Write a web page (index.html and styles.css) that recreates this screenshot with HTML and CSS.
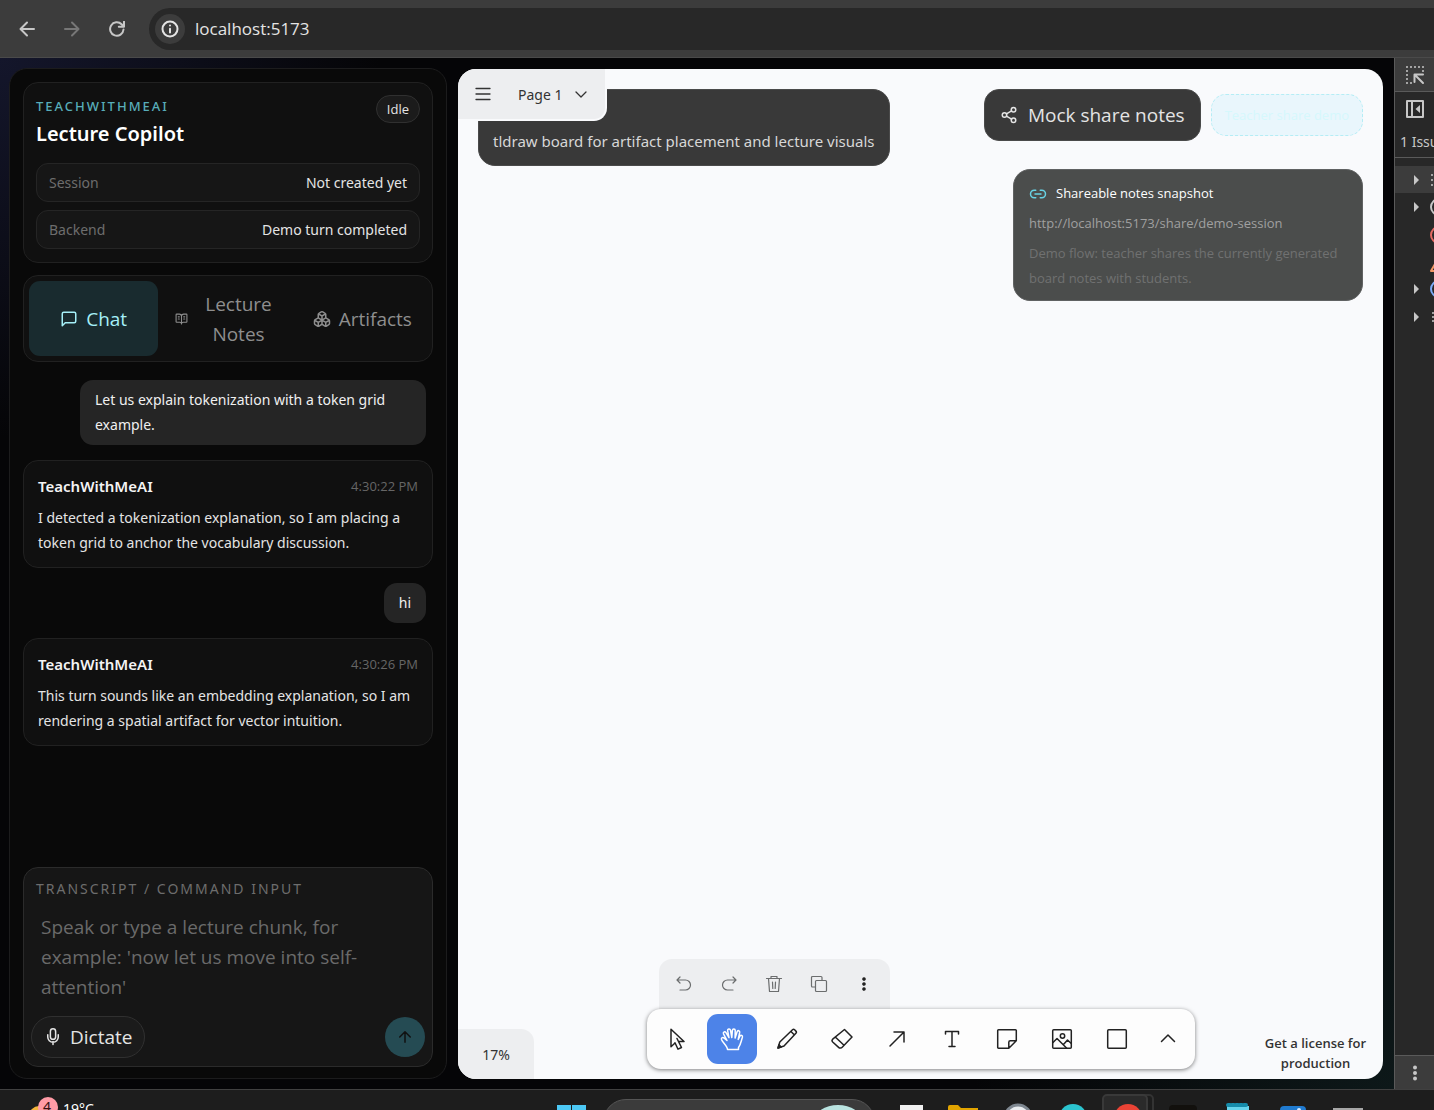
FILE: index.html
```
<!DOCTYPE html>
<html lang="en">
<head>
    <meta charset="UTF-8">
    <meta name="viewport" content="width=device-width, initial-scale=1.0">
    <title>TeachWithMeAI</title>
    <link rel="stylesheet" href="styles.css">
</head>
<body>
    <header class="browser-bar">
        <button class="nav-btn" aria-label="Back">
            <svg width="16" height="16" viewBox="0 0 16 16"><path d="M15 8H2M8 1.5L1.5 8 8 14.5"/></svg>
        </button>
        <button class="nav-btn nav-off" aria-label="Forward">
            <svg width="16" height="16" viewBox="0 0 16 16"><path d="M1 8h13M8 1.5L14.500 8 8 14.500"/></svg>
        </button>
        <button class="nav-btn" aria-label="Reload">
            <svg width="16" height="16" viewBox="0 0 16 16"><path d="M14.500 8.500A6.700 6.700 0 1 1 12.600 3.300L14.800 5.500M15 .5v5.300H9.800"/></svg>
        </button>
        <div class="address">
            <span class="site-info">
                <svg width="18" height="18" viewBox="0 0 18 18"><circle cx="9" cy="9" r="7.500"/><path d="M9 8.800v3.700M9 5.500v.1"/></svg>
            </span>
            <input class="url" type="text" value="localhost:5173" aria-label="Address">
        </div>
    </header>

    <div class="workspace">
        <main class="app">
            <aside class="sidebar">
                <section class="card intro">
                    <div class="intro-top">
                        <div>
                            <p class="eyebrow">TEACHWITHMEAI</p>
                            <h1>Lecture Copilot</h1>
                        </div>
                        <span class="pill">Idle</span>
                    </div>
                    <div class="status"><span>Session</span><strong>Not created yet</strong></div>
                    <div class="status"><span>Backend</span><strong>Demo turn completed</strong></div>
                </section>

                <nav class="card tabs">
                    <button class="tab active">
                        <svg width="18" height="18" viewBox="0 0 24 24"><path d="M21 15a2 2 0 0 1-2 2H7l-4 4V5a2 2 0 0 1 2-2h14a2 2 0 0 1 2 2z"/></svg>
                        <span>Chat</span>
                    </button>
                    <button class="tab">
                        <svg class="book" width="13" height="14" viewBox="0 0 24 24"><path d="M12 7v14M16 12h2M16 8h2M6 12h2M6 8h2M3 18a1 1 0 0 1-1-1V4a1 1 0 0 1 1-1h5a4 4 0 0 1 4 4 4 4 0 0 1 4-4h5a1 1 0 0 1 1 1v13a1 1 0 0 1-1 1h-6a3 3 0 0 0-3 3 3 3 0 0 0-3-3z"/></svg>
                        <span>Lecture Notes</span>
                    </button>
                    <button class="tab">
                        <svg width="18" height="18" viewBox="0 0 24 24"><path d="M2.970 12.920A2 2 0 0 0 2 14.630v3.240a2 2 0 0 0 .970 1.710l3 1.800a2 2 0 0 0 2.060 0L12 19v-5.500l-5-3zM7 16.500l-4.740-2.850M7 16.500l5-3M7 16.500v5.170M12 13.500V19l3.970 2.380a2 2 0 0 0 2.060 0l3-1.800a2 2 0 0 0 .970-1.710v-3.240a2 2 0 0 0-.970-1.710L17 10.500zM17 16.500l-5-3M17 16.500l4.740-2.850M17 16.500v5.170M7.970 4.420A2 2 0 0 0 7 6.130v4.370l5 3 5-3V6.130a2 2 0 0 0-.970-1.710l-3-1.800a2 2 0 0 0-2.060 0zM12 8L7.260 5.150M12 8l4.740-2.850M12 13.500V8"/></svg>
                        <span>Artifacts</span>
                    </button>
                </nav>

                <div class="messages">
                    <p class="bubble">Let us explain tokenization with a token grid example.</p>
                    <article class="card reply">
                        <div class="reply-top"><h2>TeachWithMeAI</h2><time>4:30:22 PM</time></div>
                        <p>I detected a tokenization explanation, so I am placing a token grid to anchor the vocabulary discussion.</p>
                    </article>
                    <p class="bubble">hi</p>
                    <article class="card reply">
                        <div class="reply-top"><h2>TeachWithMeAI</h2><time>4:30:26 PM</time></div>
                        <p>This turn sounds like an embedding explanation, so I am rendering a spatial artifact for vector intuition.</p>
                    </article>
                </div>

                <form class="card composer">
                    <label for="transcript">TRANSCRIPT / COMMAND INPUT</label>
                    <textarea id="transcript" rows="3" placeholder="Speak or type a lecture chunk, for example: 'now let us move into self-attention'"></textarea>
                    <div class="composer-actions">
                        <button type="button" class="dictate">
                            <svg width="18" height="18" viewBox="0 0 24 24"><path d="M12 18v4M19 9v3a7 7 0 0 1-14 0V9"/><rect x="8.500" y="1" width="7" height="14" rx="3.500"/></svg>
                            Dictate
                        </button>
                        <button type="button" class="send" aria-label="Send">
                            <svg width="18" height="18" viewBox="0 0 24 24"><path d="M12 19V5M5 12l7-7 7 7"/></svg>
                        </button>
                    </div>
                </form>
            </aside>

            <section class="board">
                <div class="board-title">tldraw board for artifact placement and lecture visuals</div>
                <div class="page-menu">
                    <button class="menu-btn" aria-label="Menu">
                        <svg width="16" height="16" viewBox="0 0 16 16"><path d="M1 2.500h14M1 8h14M1 13.500h14"/></svg>
                    </button>
                    <button class="page-btn">Page 1
                        <svg width="14" height="14" viewBox="0 0 14 14"><path d="M2 5l5 5 5-5"/></svg>
                    </button>
                </div>

                <div class="share">
                    <div class="share-row">
                        <button class="share-btn">
                            <svg width="18" height="18" viewBox="0 0 24 24"><circle cx="18" cy="5" r="3"/><circle cx="6" cy="12" r="3"/><circle cx="18" cy="19" r="3"/><path d="M8.590 13.510l6.830 3.980M15.410 6.510l-6.820 3.980"/></svg>
                            Mock share notes
                        </button>
                        <span class="share-tag">Teacher share demo</span>
                    </div>
                    <div class="snapshot">
                        <h3>
                            <svg width="18" height="18" viewBox="0 0 24 24"><path d="M9 17H7A5 5 0 0 1 7 7h2M15 7h2a5 5 0 1 1 0 10h-2M8 12h8"/></svg>
                            Shareable notes snapshot
                        </h3>
                        <p class="snapshot-url">http://localhost:5173/share/demo-session</p>
                        <p class="snapshot-note">Demo flow: teacher shares the currently generated board notes with students.</p>
                    </div>
                </div>

                <button class="zoom-level">17%</button>

                <div class="tools">
                    <div class="actions">
                        <button aria-label="Undo"><svg width="18" height="18" viewBox="0 0 18 18"><path d="M5 2L2 5l3 3M2 5h8.500a5 5 0 0 1 0 10H5"/></svg></button>
                        <button aria-label="Redo"><svg width="18" height="18" viewBox="0 0 18 18"><path d="M13 2l3 3-3 3M16 5H7.500a5 5 0 0 0 0 10H13"/></svg></button>
                        <button aria-label="Delete"><svg width="18" height="18" viewBox="0 0 18 18"><path d="M1.500 3.500h15M6 3.500v-2h6v2M3.500 3.500l1 13h9l1-13M7.500 7l.3 6.500M10.500 7l-.3 6.500"/></svg></button>
                        <button aria-label="Duplicate"><svg width="18" height="18" viewBox="0 0 18 18"><rect x="5.500" y="5.500" width="11" height="11" rx="1"/><path d="M5 12H2.500a1 1 0 0 1-1-1V2.500a1 1 0 0 1 1-1H11a1 1 0 0 1 1 1V5"/></svg></button>
                        <button class="more" aria-label="More"><svg width="18" height="18" viewBox="0 0 18 18"><circle cx="9" cy="4" r="1.200"/><circle cx="9" cy="9" r="1.200"/><circle cx="9" cy="14" r="1.200"/></svg></button>
                    </div>
                    <div class="toolbar">
                        <button aria-label="Select"><svg width="22" height="22" viewBox="0 0 22 22"><path d="M8.500 15.500L5 18.800V1.200L18 13.500h-5.500l3 6-3.500 1.700-3-6.500M12.500 13.500l-1.500-3"/></svg></button>
                        <button class="active" aria-label="Hand"><svg width="24" height="24" viewBox="0 0 24 24"><path d="M7.500 22.500C7.500 19 2.500 15.500 1.500 12.500 1 10.800 3 9.800 4.200 11.200L7 13.500 3.500 6.900C2.700 5 5 4 6 5.700l3 5L7.600 3.700C7.400 1.700 10 1.300 10.500 3.200l1.300 7.300.6-7.200c.2-1.800 2.700-1.800 2.800.1l-.1 7.600 2-6.300c.6-1.800 2.900-1.100 2.600.7l-1.500 7 1.700-3.300c.9-1.600 3-.6 2.500 1.200C21 14.500 20.500 18 18.500 20.500v2z"/></svg></button>
                        <button aria-label="Draw"><svg width="22" height="22" viewBox="0 0 22 22"><path d="M2 20l1.800-6L16.500 1.800a1.500 1.500 0 0 1 2.100 0l1.300 1.300a1.500 1.500 0 0 1 0 2.100L8 18zM15 3.500l3.200 3.200"/><path fill="currentColor" d="M2 20l1-3.200 2.200 2.200z"/></svg></button>
                        <button aria-label="Eraser"><svg width="22" height="22" viewBox="0 0 22 22"><path d="M13.500 1.500L21 9l-9.800 10.300a2.500 2.500 0 0 1-3.600.1L1.700 14a2 2 0 0 1 0-2.800zM4.800 9.500l8.200 7.800"/></svg></button>
                        <button aria-label="Arrow"><svg width="22" height="22" viewBox="0 0 22 22"><path d="M4 18L18 4M8 4h10v10"/></svg></button>
                        <button aria-label="Text"><svg width="22" height="22" viewBox="0 0 22 22"><path d="M4.500 6V3.500h13V6M11 3.500v15M8 18.500h6"/></svg></button>
                        <button aria-label="Note"><svg width="22" height="22" viewBox="0 0 22 22"><path d="M2.500 1.700h17a.8.8 0 0 1 .8.800v10.200l-7.500 7.600H2.500a.8.8 0 0 1-.8-.8V2.500a.8.8 0 0 1 .8-.8zM20.300 12.700h-6a1.500 1.500 0 0 0-1.500 1.500v6"/></svg></button>
                        <button aria-label="Asset"><svg width="22" height="22" viewBox="0 0 22 22"><rect x="1.700" y="1.700" width="18.600" height="18.600" rx="1"/><circle cx="11.500" cy="8" r="2.200"/><path d="M2 14.500l4-4 9.500 9.500M12.500 16.500l4-4.500 3.800 3.500"/></svg></button>
                        <button aria-label="Rectangle"><svg width="22" height="22" viewBox="0 0 22 22"><rect x="1.700" y="1.700" width="18.600" height="18.600" rx="1"/></svg></button>
                        <button aria-label="More tools"><svg width="22" height="22" viewBox="0 0 22 22"><path d="M4.500 13.500L11 7l6.500 6.500"/></svg></button>
                    </div>
                </div>

                <a class="license" href="#">Get a license for production</a>
            </section>
        </main>

        <aside class="devtools">
            <button class="dev-inspect" aria-label="Inspect">
                <svg width="20" height="20" viewBox="0 0 20 20"><path class="dots" d="M2 18V2h16v5M2 18h5"/><path d="M18 18L9.500 9.500M9.500 17V9.500H18"/></svg>
            </button>
            <button class="dev-panel" aria-label="Show sidebar">
                <svg width="18" height="18" viewBox="0 0 18 18"><path d="M1 1h16v16H1zM6 1v16"/><path class="fill" d="M14 5v8L9.500 9z"/></svg>
            </button>
            <p class="dev-issues">1 Issue</p>
            <ul class="dev-list">
                <li class="selected"><i></i><svg width="18" height="18" viewBox="0 0 18 18"><path class="dots" d="M2 4h16M2 9h16M2 14h16"/></svg></li>
                <li><i></i><svg width="18" height="18" viewBox="0 0 18 18"><circle cx="9" cy="9" r="8"/></svg></li>
                <li class="error"><svg width="18" height="18" viewBox="0 0 18 18"><circle cx="9" cy="9" r="8"/></svg></li>
                <li class="warning"><svg width="18" height="22" viewBox="0 0 18 22"><path d="M9 6l8 14H1z"/></svg></li>
                <li class="info"><i></i><svg width="18" height="18" viewBox="0 0 18 18"><circle cx="9" cy="9" r="8"/></svg></li>
                <li><i></i><svg width="18" height="18" viewBox="0 0 18 18"><path class="dots" d="M3 5h14M3 9h14M3 13h14"/></svg></li>
            </ul>
            <button class="dev-more" aria-label="More options">
                <svg width="18" height="18" viewBox="0 0 18 18"><circle class="fill" cx="9" cy="3.500" r="2"/><circle class="fill" cx="9" cy="9" r="2"/><circle class="fill" cx="9" cy="14.500" r="2"/></svg>
            </button>
        </aside>
    </div>

    <footer class="taskbar">
        <div class="weather">
            <svg width="32" height="32" viewBox="0 0 32 32"><circle cx="11" cy="19" r="10" fill="#f4b63c"/><circle cx="20" cy="10" r="10" fill="#ff9ba6"/></svg>
            <b>4</b>
            <span>19°C</span>
        </div>
        <div class="task-icons">
            <svg class="start" width="29" height="29" viewBox="0 0 29 29"><path d="M0 0h14v14H0zM15 0h14v14H15z" fill="#4cc8f5"/></svg>
            <div class="task-search">
                <svg width="48" height="30" viewBox="0 0 48 30"><ellipse cx="24" cy="16" rx="24" ry="16" fill="#b9e3e0"/><ellipse cx="22" cy="9" rx="7" ry="4" fill="#8ba9a8"/></svg>
            </div>
            <svg class="apps" width="500" height="20" viewBox="0 0 500 20">
                <rect x="227" y="1" width="46" height="24" rx="4" fill="#1d1d1d" stroke="#333"/>
                <rect x="223" y="1" width="44" height="24" rx="4" fill="#2a2a2a" stroke="#393939"/>
                <path d="M20 11h23v12H20z" fill="#f1f1f1"/>
                <path d="M68 13q0-2 2-2h8l3 3h17v8H68z" fill="#e2a400"/>
                <circle cx="138" cy="24" r="13" fill="#e9edf0" stroke="#7e8790" stroke-width="3"/>
                <circle cx="193" cy="24" r="14" fill="#2bc4cf"/>
                <circle cx="248" cy="24" r="14" fill="#ea4335"/>
                <rect x="289" y="11" width="28" height="20" rx="4" fill="#12100d"/>
                <path d="M347 12h22v10h-22z" fill="#67d4ec"/>
                <path d="M348 11h20" stroke="#168cab" stroke-width="4" stroke-dasharray="2 2"/>
                <rect x="400" y="12" width="26" height="20" rx="4" fill="#207bd0"/>
                <circle cx="419" cy="16" r="2" fill="#d9ebff"/>
                <path d="M453 14h30v8h-30z" fill="#a7a7a7"/>
            </svg>
        </div>
    </footer>
</body>
</html>
```

FILE: styles.css
```
* {
    box-sizing: border-box;
}
body {
    display: flex;
    flex-direction: column;
    height: 100vh;
    margin: 0;
    overflow: hidden;
    background: #050507;
    color: #e4e4e4;
    font-family: "Noto Sans", "Open Sans", sans-serif;
    font-size: 14px;
    line-height: 25px;
}
h1, h2, h3, p, ul {
    margin: 0;
    padding: 0;
}
button, input, textarea {
    margin: 0;
    padding: 0;
    border: none;
    background: none;
    color: inherit;
    font: inherit;
}
button {
    display: flex;
    align-items: center;
    justify-content: center;
    cursor: pointer;
}
/* Large labels and small print use the narrower face */
.tab, .dictate, .share-btn, .share-tag, .snapshot, .pill, .url, .composer textarea, .license, time {
    font-family: "Open Sans", "Noto Sans", sans-serif;
}
svg {
    fill: none;
    stroke: currentColor;
    stroke-width: 2;
    stroke-linecap: round;
    stroke-linejoin: round;
}

/* Browser bar */
.browser-bar {
    display: flex;
    flex: none;
    align-items: center;
    height: 58px;
    padding-left: 18px;
    background: #3c3c3c;
    border-bottom: 1px solid #4a4a4a;
}
.nav-btn {
    width: 18px;
    height: 18px;
    margin-right: 27px;
    color: #c7c7c7;
}
.nav-off {
    color: #777;
}
.address {
    display: flex;
    flex: 1;
    align-items: center;
    gap: 10px;
    height: 42px;
    margin-left: -4px;
    padding-left: 6px;
    background: #282828;
    border-radius: 21px 0 0 21px;
}
.site-info {
    display: flex;
    align-items: center;
    justify-content: center;
    width: 30px;
    height: 30px;
    background: #3c3c3c;
    border-radius: 50%;
}
.url {
    flex: 1;
    font-size: 17px;
}

.workspace {
    display: flex;
    flex: 1;
    min-height: 0;
}
.app {
    display: flex;
    flex: 1;
    gap: 11px;
    min-width: 0;
    padding: 10px 11px 10px 9px;
    background: radial-gradient(circle at top left, #14162b, transparent 380px), radial-gradient(circle at bottom right, #0d1819, transparent 420px), #050507;
}

/* Sidebar */
.sidebar {
    display: flex;
    flex: none;
    flex-direction: column;
    gap: 12px;
    width: 438px;
    padding: 13px 13px 11px;
    background: #090909;
    border: 1px solid #1c1c1d;
    border-radius: 18px;
}
.card {
    background: #101010;
    border: 1px solid #212121;
    border-radius: 15px;
}
.intro {
    display: flex;
    flex-direction: column;
    gap: 8px;
    padding: 12px 12px 13px;
}
.intro-top {
    display: flex;
    align-items: flex-start;
    justify-content: space-between;
    padding-bottom: 6px;
}
.eyebrow {
    color: #58adb9;
    font-size: 13px;
    font-weight: 500;
    letter-spacing: 2px;
    line-height: 22px;
}
h1 {
    padding-top: 2px;
    color: #fff;
    font-size: 20px;
    font-weight: 600;
    line-height: 30px;
}
.pill {
    padding: 0 10px;
    background: #1b1b1b;
    border: 1px solid #303030;
    border-radius: 14px;
    font-size: 13px;
    line-height: 26px;
}
.status {
    display: flex;
    align-items: center;
    justify-content: space-between;
    height: 39px;
    padding: 0 12px;
    background: #161616;
    border: 1px solid #252525;
    border-radius: 12px;
}
.status span {
    color: #6d6d6d;
}
.status strong {
    font-weight: 400;
}
.tabs {
    display: grid;
    grid-template-columns: repeat(3, 1fr);
    gap: 5px;
    padding: 5px;
}
.tab {
    gap: 8px;
    height: 75px;
    padding: 0 12px;
    border-radius: 11px;
    color: #8e8e8e;
    font-size: 19px;
    line-height: 30px;
}
.tab svg {
    flex: none;
}
.tab.active {
    background: #192b2f;
    color: #a5f0f8;
}
.messages {
    display: flex;
    flex: 1;
    flex-direction: column;
    gap: 15px;
    padding-top: 6px;
}
.bubble {
    align-self: flex-end;
    max-width: 346px;
    margin-right: 7px;
    padding: 7px 15px 8px;
    background: #252525;
    border-radius: 13px;
    color: #f0f0f0;
}
.reply {
    padding: 13px 14px 12px;
}
.reply-top {
    display: flex;
    justify-content: space-between;
    margin-bottom: 6px;
}
h2 {
    color: #f4f4f4;
    font-size: 15px;
    font-weight: 600;
}
time {
    color: #666;
    font-size: 13px;
}
.composer {
    display: flex;
    flex-direction: column;
    padding: 8px 7px;
    background: #161616;
    border-color: #2b2b2b;
}
.composer label {
    padding-left: 5px;
    color: #6d6d6d;
    font-size: 14px;
    letter-spacing: 2px;
}
.composer textarea {
    height: 90px;
    margin: 11px 10px 14px;
    color: #e4e4e4;
    font-size: 19px;
    line-height: 30px;
    resize: none;
}
.composer textarea::placeholder {
    color: #6a6a6a;
}
.composer-actions {
    display: flex;
    align-items: center;
    justify-content: space-between;
}
.dictate {
    gap: 8px;
    height: 42px;
    padding: 0 12px;
    background: #1b1b1b;
    border: 1px solid #303030;
    border-radius: 21px;
    font-size: 19px;
}
.send {
    width: 40px;
    height: 40px;
    background: #254b53;
    border-radius: 50%;
    color: #111;
}

/* Board */
.board {
    position: relative;
    flex: 1;
    min-width: 0;
    margin-top: 1px;
    background: #f9fafc;
    border-radius: 18px;
    overflow: hidden;
}
.board-title {
    position: absolute;
    top: 20px;
    left: 20px;
    padding: 39px 14px 11px;
    background: #393939;
    border: 1px solid #4a4a4a;
    border-radius: 17px;
    color: #d7d7d7;
    font-size: 15px;
}
.page-menu {
    position: absolute;
    top: 0;
    left: 0;
    display: flex;
    width: 149px;
    height: 52px;
    background: #edeef0;
    border: solid #f9fafc;
    border-width: 0 2px 2px 0;
    border-radius: 0 0 13px 0;
    color: #333;
}
.menu-btn {
    width: 50px;
}
.page-btn {
    gap: 12px;
    padding-left: 10px;
    font-size: 14px;
}
.page-menu svg {
    stroke-width: 1.3;
}
.share {
    position: absolute;
    top: 20px;
    right: 20px;
    display: flex;
    flex-direction: column;
    align-items: flex-end;
    gap: 28px;
}
.share-row {
    display: flex;
    align-items: center;
    gap: 10px;
}
.share-btn {
    gap: 10px;
    height: 52px;
    padding: 0 15px;
    background: #393939;
    border: 1px solid #4a4a4a;
    border-radius: 15px;
    font-size: 19px;
}
.share-tag {
    padding: 8px 13px;
    background: #e9f6fc;
    border: 1px dashed #b5edf5;
    border-radius: 15px;
    color: #d5f8fc;
    font-size: 13px;
    line-height: 24px;
}
.snapshot {
    width: 350px;
    padding: 11px 15px 9px;
    background: #4b4d4c;
    border: 1px solid #606262;
    border-radius: 17px;
    font-size: 13px;
}
h3 {
    display: flex;
    align-items: center;
    gap: 9px;
    color: #fff;
    font-size: 13px;
    font-weight: 400;
}
h3 svg {
    color: #68d3e5;
}
.snapshot-url {
    margin: 5px 0;
    color: #a0a0a0;
}
.snapshot-note {
    color: #707171;
}
.zoom-level {
    position: absolute;
    bottom: 0;
    left: 0;
    width: 76px;
    height: 50px;
    background: #edeef0;
    border-radius: 0 13px 0 0;
    color: #333;
    font-size: 14px;
}
.tools {
    position: absolute;
    bottom: 10px;
    left: 50%;
    display: flex;
    flex-direction: column;
    transform: translateX(-50%);
    color: #222;
}
.actions {
    display: flex;
    align-self: flex-start;
    height: 50px;
    margin-left: 12px;
    padding: 0 3px;
    background: #edeef0;
    border-radius: 13px 13px 0 0;
    color: #6b6d6e;
}
.actions button {
    width: 45px;
}
.actions svg {
    stroke-width: 1.2;
}
.actions .more svg {
    color: #222;
    fill: #222;
}
.toolbar {
    display: flex;
    gap: 5px;
    height: 60px;
    padding: 5px;
    background: #fdfdfd;
    border-radius: 14px;
    box-shadow: 0 1px 4px rgba(0, 0, 0, 0.5);
}
.toolbar button {
    width: 50px;
    border-radius: 11px;
}
.toolbar svg {
    stroke-width: 1.5;
}
.toolbar .active {
    background: #4d83e8;
    color: #fff;
}
.toolbar button:last-child {
    width: 43px;
}
.license {
    position: absolute;
    right: 10px;
    bottom: 6px;
    width: 115px;
    color: #333;
    font-size: 13px;
    font-weight: 600;
    line-height: 20px;
    text-align: center;
    text-decoration: none;
}

/* Developer tools */
.devtools {
    display: flex;
    flex: none;
    flex-direction: column;
    width: 40px;
    background: #282828;
    border-left: 1px solid #5a5a5a;
    color: #c7c7c7;
    overflow: hidden;
}
.devtools .dots {
    stroke-dasharray: 0 4;
}
.devtools .fill {
    fill: currentColor;
    stroke: none;
}
.dev-inspect {
    height: 34px;
    background: #3c3c3c;
    border-bottom: 1px solid #5a5a5a;
}
.dev-panel {
    height: 34px;
}
.dev-issues {
    height: 32px;
    padding-left: 5px;
    border-bottom: 1px solid #5a5a5a;
    font-size: 14px;
    line-height: 31px;
    white-space: nowrap;
}
.dev-list {
    flex: 1;
    padding-top: 8px;
    list-style: none;
}
.dev-list li {
    display: flex;
    align-items: center;
    height: 28px;
    padding-left: 35px;
}
.dev-list svg {
    flex: none;
}
.dev-list i {
    flex: none;
    margin: 0 15px 0 -16px;
    border: 5px solid transparent;
    border-right: 0;
    border-left: 5px solid #c7c7c7;
}
.dev-list i + svg {
    margin-left: -4px;
}
.dev-list .selected, .dev-list .error, .dev-list .warning {
    height: 27px;
}
.selected {
    background: #3c3c3c;
}
.error {
    color: #e46962;
}
.warning {
    color: #f29766;
}
.info svg {
    color: #7cacf8;
}
.dev-more {
    height: 34px;
    background: #3c3c3c;
    border-top: 1px solid #5a5a5a;
}

/* Taskbar */
.taskbar {
    position: relative;
    display: flex;
    flex: none;
    height: 21px;
    background: #1d1d1d;
    border-top: 1px solid #404040;
    overflow: hidden;
}
.taskbar svg {
    flex: none;
    stroke: none;
}
.weather {
    position: relative;
    display: flex;
    width: 557px;
    padding: 7px 0 0 28px;
    color: #fff;
    line-height: 23px;
}
.weather b {
    position: absolute;
    left: 43px;
    color: #311;
    font-weight: 400;
    line-height: 20px;
}
.weather span {
    padding-left: 3px;
}
.task-icons {
    display: flex;
    flex: 1;
}
.start {
    margin-top: 15px;
}
.task-search {
    display: flex;
    flex: none;
    justify-content: flex-end;
    width: 272px;
    height: 46px;
    margin: 9px 5px 0 17px;
    padding: 5px 12px 0 0;
    background: #3b3b3b;
    border: 1px solid #555;
    border-radius: 23px;
}
.apps {
    margin-top: 4px;
}
```
